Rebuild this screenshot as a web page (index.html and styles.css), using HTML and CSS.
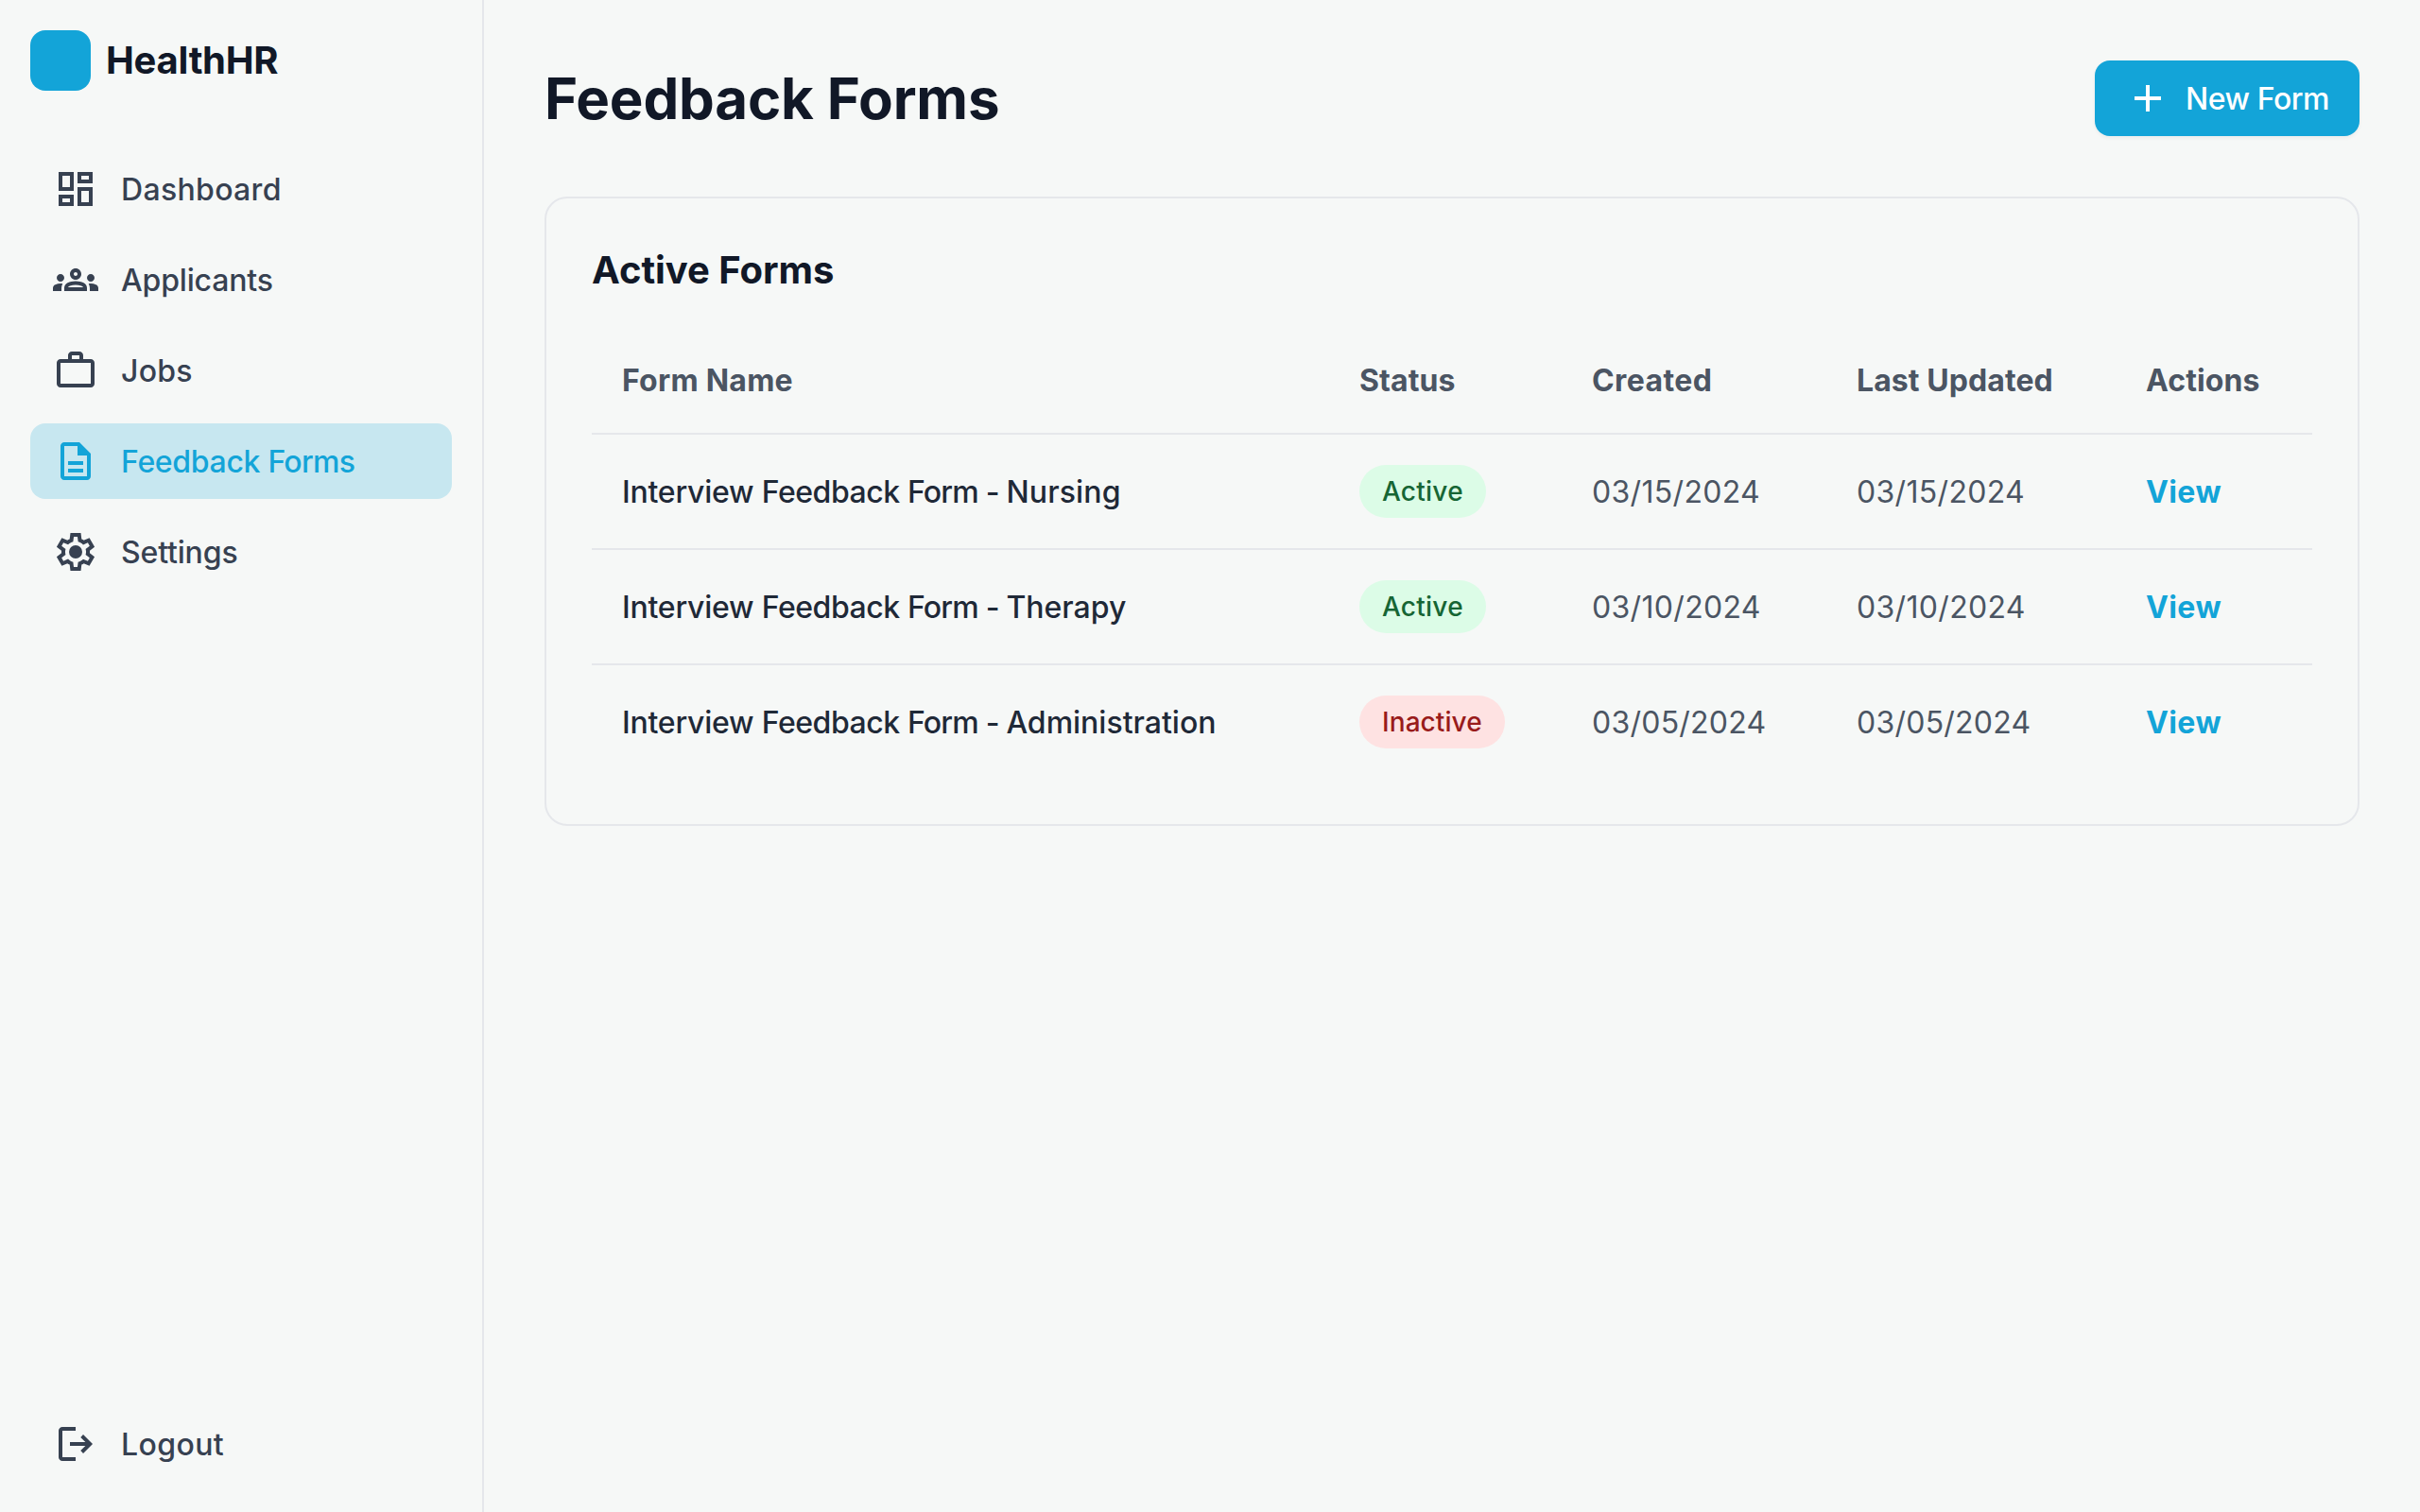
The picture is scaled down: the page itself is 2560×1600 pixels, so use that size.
FILE: index.html
```html
<!DOCTYPE html>
<html lang="en">
<head>
<meta charset="utf-8">
<title>HealthHR - Feedback Forms</title>
<link rel="stylesheet" href="styles.css">
</head>
<body>
<div class="app">
  <aside class="sidebar">
    <div class="brand">
      <div class="brand-mark"></div>
      <span class="brand-name">HealthHR</span>
    </div>
    <nav class="nav">
      <a class="nav-item">
        <svg class="icon" viewBox="0 0 24 24"><path d="M19 5v2h-4V5h4M9 5v6H5V5h4m10 8v6h-4v-6h4M9 17v2H5v-2h4M21 3h-8v6h8V3zM11 3H3v10h8V3zm10 8h-8v10h8V11zm-10 4H3v6h8v-6z"/></svg>
        <span class="track-p16">Dashboard</span>
      </a>
      <a class="nav-item">
        <svg class="icon" viewBox="0 0 24 24"><path d="M4 13c1.100 0 2-.9 2-2s-.9-2-2-2-2 .9-2 2 .9 2 2 2zm1.130 1.100C4.760 14.040 4.390 14 4 14c-.99 0-1.930.210-2.780.580C.480 14.900 0 15.620 0 16.430V18h4.500v-1.610c0-.83.230-1.610.630-2.290zM20 13c1.100 0 2-.9 2-2s-.9-2-2-2-2 .9-2 2 .9 2 2 2zm4 3.430c0-.81-.48-1.530-1.220-1.850-.85-.37-1.790-.58-2.780-.58-.39 0-.76.040-1.130.100.4.680.630 1.460.630 2.290V18H24v-1.570zM16.240 13.650c-1.170-.52-2.610-.9-4.240-.9-1.630 0-3.070.390-4.240.9C6.680 14.130 6 15.210 6 16.390V18h12v-1.610c0-1.180-.68-2.260-1.760-2.740zM8.070 16c.090-.23.130-.39.910-.69.970-.38 1.990-.56 3.020-.56s2.050.180 3.020.560c.77.3.81.460.910.690H8.070zM12 8c.55 0 1 .45 1 1s-.45 1-1 1-1-.45-1-1 .45-1 1-1m0-2c-1.660 0-3 1.340-3 3s1.340 3 3 3 3-1.340 3-3-1.340-3-3-3z"/></svg>
        <span class="track-n08">Applicants</span>
      </a>
      <a class="nav-item">
        <svg class="icon" viewBox="0 0 24 24"><path d="M4 21q-.825 0-1.413-.587T2 19V8q0-.825.588-1.413T4 6h4V4q0-.825.588-1.413T10 2h4q.825 0 1.413.588T16 4v2h4q.825 0 1.413.588T22 8v11q0 .825-.587 1.413T20 21H4Zm0-2h16V8H4v11Zm6-13h4V4h-4v2Z"/></svg>
        <span class="track-p12">Jobs</span>
      </a>
      <a class="nav-item nav-item-active">
        <svg class="icon" viewBox="0 0 24 24"><path d="M8 18h8v-2H8v2Zm0-4h8v-2H8v2Zm-2 8q-.825 0-1.413-.587T4 20V4q0-.825.588-1.413T6 2h8l6 6v12q0 .825-.587 1.413T18 22H6Zm7-13V4H6v16h12V9h-5Z"/></svg>
        <span><span class="track-n16">Feedback </span><span class="track-n36">Forms</span></span>
      </a>
      <a class="nav-item">
        <svg class="icon" viewBox="0 0 24 24"><path d="m9.250 22-.4-3.200q-.325-.125-.612-.3t-.563-.375L4.700 19.375l-2.750-4.750 2.575-1.950Q4.500 12.500 4.500 12.338v-.675q0-.163.025-.338L1.950 9.375l2.750-4.750 2.975 1.250q.275-.2.575-.375t.6-.3l.4-3.200h5.500l.4 3.200q.325.125.613.3t.562.375l2.975-1.250 2.750 4.750-2.575 1.950q.025.175.025.338v.674q0 .163-.05.338l2.575 1.950-2.750 4.750-2.950-1.250q-.275.2-.575.375t-.6.3l-.4 3.200h-5.500ZM11 20h1.975l.35-2.650q.775-.2 1.438-.588t1.212-.937l2.475 1.025.975-1.700-2.150-1.625q.125-.35.175-.737T17.500 12q0-.4-.05-.787t-.175-.738l2.150-1.625-.975-1.700-2.475 1.050q-.55-.575-1.212-.963t-1.438-.587L13 4h-1.975l-.35 2.650q-.775.2-1.437.588t-1.213.937L5.550 7.150l-.975 1.700 2.150 1.600q-.125.375-.175.750t-.05.8q0 .4.050.775t.175.750l-2.150 1.625.975 1.700 2.475-1.050q.55.575 1.213.963t1.437.587L11 20Z"/><circle cx="12" cy="12" r="3.500"/></svg>
        <span class="track-n08">Settings</span>
      </a>
    </nav>
    <a class="nav-item">
      <svg class="icon" viewBox="0 0 24 24"><path d="M5 21q-.825 0-1.413-.587T3 19V5q0-.825.588-1.413T5 3h7v2H5v14h7v2H5Zm11-4-1.375-1.450 2.550-2.550H9v-2h8.175l-2.550-2.550L16 7l5 5-5 5Z"/></svg>
      <span class="track-p20">Logout</span>
    </a>
  </aside>
  <main class="main">
    <header class="page-header">
      <h1 class="page-title">Feedback Forms</h1>
      <button class="button" type="button">
        <svg class="icon" viewBox="0 0 24 24"><path d="M11 13H5v-2h6V5h2v6h6v2h-6v6h-2z"/></svg>
        <span class="track-n24">New Form</span>
      </button>
    </header>
    <section class="card">
      <h2 class="card-title">Active Forms</h2>
      <table class="table">
        <colgroup><col class="col-name"><col class="col-status"><col class="col-created"><col class="col-updated"><col class="col-actions"></colgroup>
        <thead>
          <tr><th class="track-p12">Form Name</th><th class="track-p04">Status</th><th class="track-p20">Created</th><th class="track-p04">Last Updated</th><th class="track-p04">Actions</th></tr>
        </thead>
        <tbody>
          <tr>
            <td class="name"><span class="track-n12">Interview </span><span class="track-n22">Feedback </span><span class="track-n40">Form - </span><span class="track-p08">Nursing</span></td>
            <td><span class="badge badge-active track-p12">Active</span></td>
            <td class="track-p16">03/15/2024</td>
            <td class="track-p16">03/15/2024</td>
            <td><a class="link">View</a></td>
          </tr>
          <tr>
            <td class="name"><span class="track-n12">Interview </span><span class="track-n22">Feedback </span><span class="track-n40">Form - </span><span>Therapy</span></td>
            <td><span class="badge badge-active track-p12">Active</span></td>
            <td class="track-p16">03/10/2024</td>
            <td class="track-p16">03/10/2024</td>
            <td><a class="link">View</a></td>
          </tr>
          <tr>
            <td class="name"><span class="track-n12">Interview </span><span class="track-n22">Feedback </span><span class="track-n40">Form - </span><span>Administration</span></td>
            <td><span class="badge badge-inactive track-p04">Inactive</span></td>
            <td class="track-p12">03/05/2024</td>
            <td class="track-p12">03/05/2024</td>
            <td><a class="link">View</a></td>
          </tr>
        </tbody>
      </table>
    </section>
  </main>
</div>
</body>
</html>
```
FILE: styles.css
```css
* {
  box-sizing: border-box;
  margin: 0;
  padding: 0;
}

body {
  height: 1600px;
  overflow: hidden;
  background: #f6f8f7;
  color: #111827;
  font-family: Inter, "Liberation Sans", sans-serif;
  font-size: 16px;
  line-height: 24px;
}

/* The interface is laid out at 1280x800 and shown at double size. */
.app {
  display: flex;
  width: 1280px;
  height: 800px;
  transform: scale(2);
  transform-origin: 0 0;
}

.sidebar {
  display: flex;
  flex-direction: column;
  width: 256px;
  padding: 16px;
  border-right: 1px solid #e5e7eb;
}

.brand {
  display: flex;
  align-items: center;
  gap: 8px;
  margin-bottom: 32px;
}

.brand-mark {
  width: 32px;
  height: 32px;
  border-radius: 8px;
  background: #13a4d8;
}

.brand-name {
  font-size: 20px;
  line-height: 28px;
  font-weight: 700;
  letter-spacing: -0.14px;
}

.nav {
  display: flex;
  flex: 1;
  flex-direction: column;
  gap: 8px;
}

.nav-item {
  display: flex;
  align-items: center;
  gap: 12px;
  padding: 8px 12px;
  border-radius: 8px;
  color: #374151;
  font-weight: 500;
}

.nav-item-active {
  background: #c7e7f0;
  color: #13a4d8;
}

.nav-item span {
  white-space: pre;
}

.icon {
  flex: none;
  width: 24px;
  height: 24px;
  fill: currentColor;
}

.main {
  flex: 1;
  padding: 32px;
}

.page-header {
  display: flex;
  align-items: center;
  justify-content: space-between;
  margin-bottom: 32px;
}

.page-title {
  font-size: 30px;
  line-height: 36px;
  font-weight: 700;
  letter-spacing: -0.09px;
}

.button {
  display: flex;
  align-items: center;
  gap: 8px;
  padding: 8px 16px;
  border: 0;
  border-radius: 8px;
  background: #13a4d8;
  box-shadow: 0 1px 2px rgba(0, 0, 0, 0.05);
  color: #fff;
  font: inherit;
  font-weight: 500;
}

.card {
  padding: 24px;
  border: 1px solid #e5e7eb;
  border-radius: 12px;
}

.card-title {
  margin-bottom: 16px;
  font-size: 20px;
  line-height: 28px;
  font-weight: 700;
  letter-spacing: -0.02px;
}

.table {
  width: 100%;
  border-collapse: separate;
  border-spacing: 0;
  table-layout: fixed;
}

.col-name { width: 390px; }
.col-status { width: 123px; }
.col-created { width: 140px; }
.col-updated { width: 153px; }
.col-actions { width: 104px; }

.table th,
.table td {
  padding: 16px;
  text-align: left;
  vertical-align: middle;
  white-space: nowrap;
  color: #4b5563;
}

.table th {
  border-bottom: 1px solid #e5e7eb;
  font-weight: 700;
}

.table td {
  padding-top: 0;
  padding-bottom: 0;
  height: 60px;
}

.table tbody tr:not(:last-child) td {
  height: 61px;
  border-bottom: 1px solid #e5e7eb;
}

.table .name {
  color: #1f2937;
  font-weight: 500;
}

.badge {
  display: inline-flex;
  vertical-align: middle;
  padding: 4px 12px;
  border-radius: 14px;
  font-size: 14px;
  line-height: 20px;
  font-weight: 500;
}

.badge-active {
  background: #dcfce7;
  color: #166534;
}

.badge-inactive {
  background: #fee2e2;
  color: #991b1b;
}

.link {
  color: #13a4d8;
  font-weight: 700;
  letter-spacing: 0.2px;
}

/* Letter-spacing steps, in hundredths of a pixel: n tightens, p loosens. */
.track-n40 { letter-spacing: -0.4px; }
.track-n36 { letter-spacing: -0.36px; }
.track-n24 { letter-spacing: -0.24px; }
.track-n22 { letter-spacing: -0.22px; }
.track-n16 { letter-spacing: -0.16px; }
.track-n12 { letter-spacing: -0.12px; }
.track-n08 { letter-spacing: -0.08px; }
.track-p04 { letter-spacing: 0.04px; }
.track-p08 { letter-spacing: 0.08px; }
.track-p12 { letter-spacing: 0.12px; }
.track-p16 { letter-spacing: 0.16px; }
.track-p20 { letter-spacing: 0.2px; }
```
